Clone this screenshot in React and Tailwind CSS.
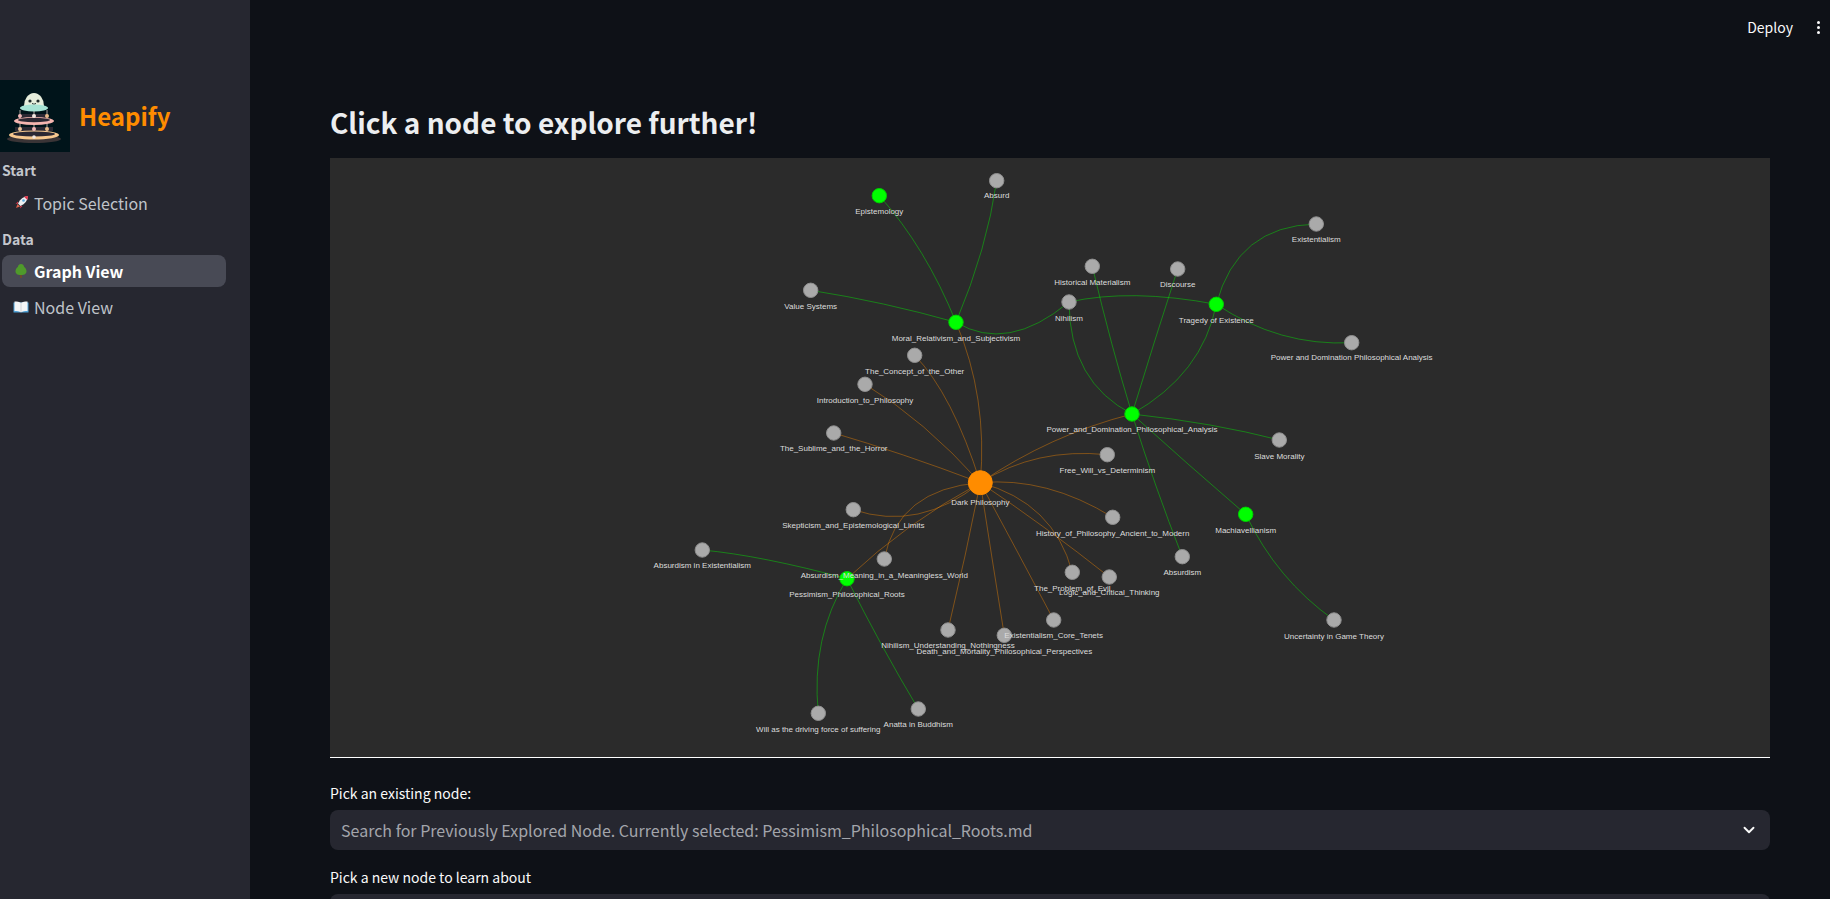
import { ChevronDown } from 'lucide-react';

// page coordinates, the svg viewBox starts at the panel corner
const nodes = {
  epistemology: { x: 879.3, y: 195.7, label: 'Epistemology', ly: 195.7 + 15.3, color: 'green' },
  absurd: { x: 996.7, y: 180.7, label: 'Absurd', ly: 195.3 },
  moral: { x: 956, y: 322.3, label: 'Moral_Relativism_and_Subjectivism', ly: 337.7, color: 'green' },
  value: { x: 810.7, y: 290.3, label: 'Value Systems', ly: 305.7 },
  historical: { x: 1092.3, y: 266.3, label: 'Historical Materialism', ly: 281.7 },
  nihilism: { x: 1069, y: 302, label: 'Nihilism', ly: 317.7 },
  concept: { x: 914.7, y: 355.3, label: 'The_Concept_of_the_Other', ly: 370.7 },
  intro: { x: 865, y: 384.3, label: 'Introduction_to_Philosophy', ly: 399.7 },
  sublime: { x: 833.7, y: 433, label: 'The_Sublime_and_the_Horror', ly: 447.7 },
  power: { x: 1132, y: 414, label: 'Power_and_Domination_Philosophical_Analysis', ly: 428.7, color: 'green' },
  freeWill: { x: 1107.3, y: 454.7, label: 'Free_Will_vs_Determinism', ly: 469.7 },
  dark: { x: 980.3, y: 482.7, label: 'Dark Philosophy', ly: 502.3, color: 'orange', r: 12 },
  discourse: { x: 1177.7, y: 269, label: 'Discourse', ly: 284.3 },
  tragedy: { x: 1216.3, y: 304.3, label: 'Tragedy of Existence', ly: 319.7, color: 'green' },
  existentialism: { x: 1316.3, y: 224, label: 'Existentialism', ly: 239.3 },
  powerDom: { x: 1351.7, y: 342.7, label: 'Power and Domination Philosophical Analysis', ly: 357.3 },
  slave: { x: 1279.3, y: 440, label: 'Slave Morality', ly: 455.7 },
  skepticism: { x: 853.3, y: 509.7, label: 'Skepticism_and_Epistemological_Limits', ly: 524.7 },
  absurdismEx: { x: 702.3, y: 550, label: 'Absurdism in Existentialism', ly: 564.7 },
  absurdismMeaning: { x: 884.3, y: 559, label: 'Absurdism_Meaning_in_a_Meaningless_World', ly: 574.7 },
  pessimism: { x: 847, y: 578.7, label: 'Pessimism_Philosophical_Roots', ly: 593.7, color: 'green' },
  will: { x: 818.3, y: 713.3, label: 'Will as the driving force of suffering', ly: 728.7 },
  anatta: { x: 918.3, y: 709, label: 'Anatta in Buddhism', ly: 724.3 },
  nihilismU: { x: 948, y: 630, label: 'Nihilism_Understanding_Nothingness', ly: 644.7 },
  death: { x: 1004.3, y: 635.3, label: 'Death_and_Mortality_Philosophical_Perspectives', ly: 650.7 },
  existCore: { x: 1053.7, y: 620, label: 'Existentialism_Core_Tenets', ly: 634.7 },
  evil: { x: 1072.3, y: 572.3, label: 'The_Problem_of_Evil', ly: 587.7 },
  logic: { x: 1109.3, y: 577, label: 'Logic_and_Critical_Thinking', ly: 591.7 },
  history: { x: 1112.7, y: 517.3, label: 'History_of_Philosophy_Ancient_to_Modern', ly: 532.7 },
  machiavellianism: { x: 1245.7, y: 514.3, label: 'Machiavellianism', ly: 529.7, color: 'green' },
  absurdism: { x: 1182.3, y: 556.7, label: 'Absurdism', ly: 571.7 },
  uncertainty: { x: 1334, y: 620, label: 'Uncertainty in Game Theory', ly: 635.7 },
};

// [from, to, point the curve passes halfway]
const greenEdges = [
  ['moral', 'epistemology', 921.7, 253.3],
  ['moral', 'absurd', 981.7, 250],
  ['moral', 'value', 883.3, 304],
  ['moral', 'nihilism', 1010, 332.7],
  ['nihilism', 'tragedy', 1136.7, 295.7],
  ['nihilism', 'power', 1085, 370],
  ['historical', 'power', 1111.7, 343.3],
  ['discourse', 'power', 1155, 340],
  ['tragedy', 'power', 1188.3, 366.7],
  ['tragedy', 'existentialism', 1251.7, 245],
  ['tragedy', 'powerDom', 1281.7, 335],
  ['power', 'slave', 1210, 425],
  ['power', 'absurdism', 1156, 486],
  ['power', 'machiavellianism', 1188, 464],
  ['machiavellianism', 'uncertainty', 1283.3, 573.3],
  ['pessimism', 'absurdismEx', 768.3, 560],
  ['pessimism', 'will', 821.7, 641.7],
  ['pessimism', 'anatta', 881.7, 645],
];

const orangeEdges = [
  ['dark', 'moral', 978, 400],
  ['dark', 'concept', 950, 406.7],
  ['dark', 'intro', 923.3, 426.7],
  ['dark', 'sublime', 903.3, 455],
  ['dark', 'power', 1053, 441.7],
  ['dark', 'freeWill', 1040, 458],
  ['dark', 'history', 1046.7, 488.3],
  ['dark', 'evil', 1040, 515],
  ['dark', 'logic', 1045, 528],
  ['dark', 'existCore', 1017, 551],
  ['dark', 'death', 992, 558],
  ['dark', 'nihilismU', 965, 556],
  ['dark', 'skepticism', 918, 514],
  ['dark', 'absurdismMeaning', 915, 505],
  ['dark', 'pessimism', 910, 526.7],
];

const edgePath = ([from, to, mx, my]) => {
  const a = nodes[from];
  const b = nodes[to];
  const cx = 2 * mx - (a.x + b.x) / 2;
  const cy = 2 * my - (a.y + b.y) / 2;
  return `M${a.x} ${a.y}Q${cx} ${cy} ${b.x} ${b.y}`;
};

function GraphCanvas() {
  return (
    <svg viewBox="330 158 1440 599" className="block h-[599px] w-full">
      <g fill="none" stroke="#00ff00" strokeOpacity="0.4">
        {greenEdges.map((e) => <path key={e[0] + e[1]} d={edgePath(e)} />)}
      </g>
      <g fill="none" stroke="#ff8c00" strokeOpacity="0.4">
        {orangeEdges.map((e) => <path key={e[1]} d={edgePath(e)} />)}
      </g>
      {Object.entries(nodes).map(([id, n]) => (
        <circle
          key={id}
          cx={n.x}
          cy={n.y}
          r={n.r || 7.2}
          fill={n.color === 'green' ? '#00ff00' : n.color === 'orange' ? '#ff8c00' : '#aaaaaa'}
          stroke={n.color === 'green' ? '#00d000' : n.color === 'orange' ? '#ff8c00' : '#8f8f8f'}
          strokeWidth="1"
        />
      ))}
      <g className="fill-[#dddddd] text-[8px] font-['Liberation_Sans',Arial,sans-serif]">
        {Object.entries(nodes).map(([id, n]) => (
          <text key={id} x={n.x} y={n.ly + 3} textAnchor="middle">{n.label}</text>
        ))}
      </g>
    </svg>
  );
}

function Logo() {
  return (
    <svg viewBox="0 0 70 72" className="h-[72px] w-[70px] shrink-0 bg-[#00141a]">
      <ellipse cx="34" cy="59" rx="27" ry="4" fill="#3a3436" />
      <path d="M24 26a10 13 0 0 1 20 0v2H24z" fill="#e6eedc" />
      <circle cx="30" cy="21" r="1.6" fill="#1d2a2a" />
      <circle cx="38" cy="21" r="1.6" fill="#1d2a2a" />
      <path d="M32 23.5q2 1.5 4 0" stroke="#1d2a2a" fill="none" />
      <rect x="22" y="34" width="25" height="4" fill="#2b2833" />
      <rect x="15" y="47" width="38" height="4" fill="#2b2833" />
      <path d="M20 30v26M34 28v28M47 30v26" stroke="#d9c8c0" strokeWidth="0.8" />
      <ellipse cx="34" cy="28" rx="14" ry="3.5" fill="#a6e3d4" />
      <ellipse cx="34" cy="41" rx="20" ry="4" fill="#f5b5b0" />
      <ellipse cx="34" cy="40" rx="16" ry="2.2" fill="#2b2833" />
      <ellipse cx="34" cy="55" rx="25" ry="4.5" fill="#f6c88f" />
      <ellipse cx="34" cy="54" rx="21" ry="2.6" fill="#2b2833" />
      <circle cx="20" cy="36" r="2" fill="#f0b6b6" />
      <circle cx="34" cy="36" r="2" fill="#f0e6e0" />
      <circle cx="47" cy="36" r="2" fill="#e8b98a" />
      <circle cx="20" cy="49" r="2" fill="#eec39a" />
      <circle cx="34" cy="49" r="2" fill="#f0b6b6" />
      <circle cx="47" cy="49" r="2" fill="#e8b98a" />
      <circle cx="34" cy="57" r="1.8" fill="#f0e6e0" />
    </svg>
  );
}

const RocketIcon = () => (
  <svg viewBox="0 0 16 16" className="h-4 w-4 shrink-0">
    <path d="M3 13l1.5-4 2.5 2.5z" fill="#d9634c" />
    <path d="M5 8.5C7 4 10.5 1.5 15 1c-.5 4.500-3 8-7.500 10z" fill="#eceff1" />
    <path d="M11 1.700c1.500-.5 2.800-.7 4-.7 0 1.200-.2 2.500-.7 4z" fill="#e0354a" />
    <path d="M5 8.500l-2.500.5L5 6.500zM7.500 11l-.5 2.500 2.500-2.500z" fill="#e0354a" />
    <circle cx="10.500" cy="5.500" r="1.300" fill="#5aa9dc" />
  </svg>
);

const TreeIcon = () => (
  <svg viewBox="0 0 16 16" className="h-4 w-4 shrink-0">
    <rect x="7" y="11" width="2" height="4" fill="#6b4a2b" />
    <path d="M8 1c2 0 3 1.500 3.200 3 1.300.8 2.300 2.400 2.300 4.200 0 2-1.500 3.800-5.500 3.800S2.500 10.200 2.500 8.200C2.500 6.400 3.500 4.800 4.800 4 5 2.500 6 1 8 1z" fill="#4f9a2b" />
  </svg>
);

const BookIcon = () => (
  <svg viewBox="0 0 16 16" className="h-4 w-4 shrink-0">
    <path d="M0.500 3.500h15v10h-15z" fill="#4ea3d9" />
    <path d="M1.500 2.500c2.500 0 5 .3 6.500 1.300 1.500-1 4-1.300 6.500-1.300v9.500c-2.500 0-5 .3-6.500 1.200-1.500-.9-4-1.200-6.500-1.200z" fill="#f4f5f6" />
    <path d="M8 3.800v9.400" stroke="#b8bcc2" strokeWidth="0.600" />
  </svg>
);

function NavLink({ icon, label, active }) {
  return (
    <div className={`mx-[2px] flex h-[32px] w-[224px] items-center gap-[5px] rounded-lg pl-[11px] text-[16px] ${active ? 'bg-[#484a55] font-semibold text-white' : 'text-[#bfc3c9]'}`}>
      {icon}
      <span>{label}</span>
    </div>
  );
}

function SelectBox({ text }) {
  return (
    <div className="flex h-[40px] items-center justify-between rounded-lg bg-[#262730] pl-[11px] pr-[12px] text-[16px] text-[#a3a5ab]">
      <span>{text}</span>
      {text && <ChevronDown className="h-[18px] w-[18px] text-[#fafafa]" strokeWidth={2.500} />}
    </div>
  );
}

export default function App() {
  return (
    <div className="flex h-screen overflow-hidden bg-[#0e1117] font-['Noto_Sans_CJK_SC','Noto_Sans',sans-serif] text-[#fafafa]">
      <aside className="w-[250px] shrink-0 bg-[#262730] pt-[80px]">
        <div className="flex items-center gap-[9px]">
          <Logo />
          <span className="text-[24px] font-bold text-[#ff8c00]">Heapify</span>
        </div>
        <p className="mt-[8px] px-[2px] text-[14px] font-semibold leading-[20px] text-[#c3c6cc]">Start</p>
        <div className="mt-[7px]">
          <NavLink icon={<RocketIcon />} label="Topic Selection" />
        </div>
        <p className="mt-[10px] px-[2px] text-[14px] font-semibold leading-[20px] text-[#c3c6cc]">Data</p>
        <div className="mt-[6px] flex flex-col gap-[4px]">
          <NavLink icon={<TreeIcon />} label="Graph View" active />
          <NavLink icon={<BookIcon />} label="Node View" />
        </div>
      </aside>

      <main className="min-w-0 flex-1">
        <header className="flex h-[54px] items-center justify-end pr-[10px]">
          <span className="text-[14px]">Deploy</span>
          <div className="ml-[24px] flex flex-col gap-[2px]">
            <span className="h-[3px] w-[3px] rounded-full bg-[#fafafa]" />
            <span className="h-[3px] w-[3px] rounded-full bg-[#fafafa]" />
            <span className="h-[3px] w-[3px] rounded-full bg-[#fafafa]" />
          </div>
        </header>
        <div className="pl-[80px] pr-[60px]">
          <h1 className="mt-[48px] text-[28px] font-bold leading-[40px] text-[#eceef0]">Click a node to explore further!</h1>
          <div className="mt-[16px] border-b border-white bg-[#2b2b2b]">
            <GraphCanvas />
          </div>
          <label className="mt-[25px] block text-[14px] leading-[20px]">Pick an existing node:</label>
          <div className="mt-[7px]">
            <SelectBox text="Search for Previously Explored Node. Currently selected: Pessimism_Philosophical_Roots.md" />
          </div>
          <label className="mt-[17px] block text-[14px] leading-[20px]">Pick a new node to learn about</label>
          <div className="mt-[7px]">
            <SelectBox text="" />
          </div>
        </div>
      </main>
    </div>
  );
}
